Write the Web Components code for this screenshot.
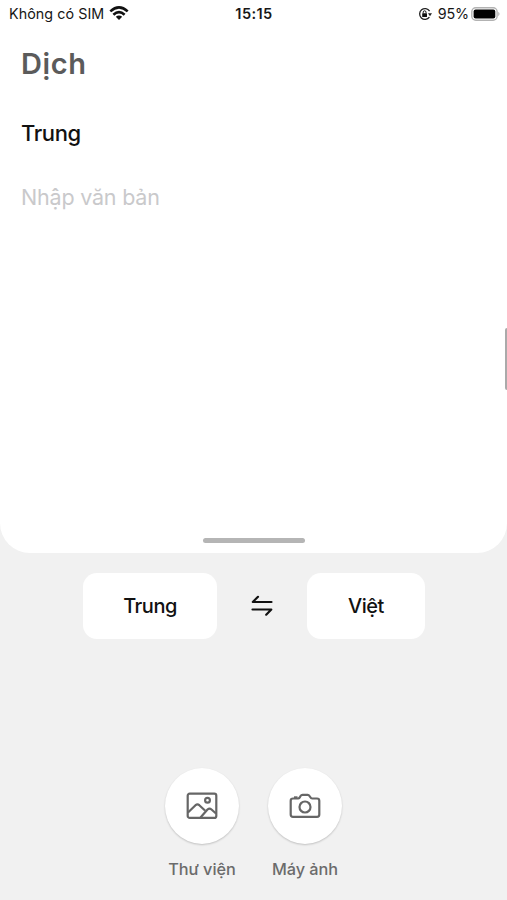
<!DOCTYPE html>
<html lang="vi"><head><meta charset="utf-8"><title>Dịch</title>
<style>html,body{margin:0;height:100%}body{overflow:hidden;background:#f1f1f1;font-family:Inter,"Liberation Sans",sans-serif}</style></head>
<body><translate-app></translate-app>
<script>
const define = (name, html) => customElements.define(name, class extends HTMLElement {
  constructor() { super(); this.attachShadow({mode: 'open'}).innerHTML = html; }
});

define('status-bar', `<style>
:host{display:grid;grid-template-columns:1fr auto 1fr;align-items:center;height:28px;padding:0 7px 0 9px;color:#171717;font-size:14.3px;line-height:20px;box-sizing:border-box}
div{display:flex;align-items:center}.r{justify-content:flex-end}
.t{font-weight:600;letter-spacing:.4px;font-size:14.6px;margin-right:1px}
svg{display:block;flex:none}
.sim{letter-spacing:.06px;white-space:nowrap}.pct{letter-spacing:-.1px;margin:0 2px 0 6px}
</style>
<div><span class="sim">Không có SIM</span>
<svg style="margin-left:5px;margin-top:-1px" width="20" height="15" viewBox="0 0 20 15"><g fill="none" stroke="#111" stroke-width="2.6"><path d="M1.3 5.4Q10-2.5 18.7 5.4"/><path d="M4.4 8.7Q10 3.6 15.6 8.7"/></g><path d="M6.8 10.8Q10 8.1 13.2 10.8L10 14Z" fill="#111"/></svg></div>
<div class="t">15:15</div>
<div class="r"><svg width="14" height="14" viewBox="0 0 14 14"><path d="M11.6 4.1A5.4 5.4 0 1 0 11.4 10.2" fill="none" stroke="#222" stroke-width="1.3"/><path d="M10 6.3h4l-2 3z" fill="#222"/><rect x="4.2" y="6.2" width="4.8" height="3.8" rx=".5" fill="#111"/><path d="M5.2 6.4V5.2a1.4 1.4 0 0 1 2.8 0v1.2" fill="none" stroke="#111"/></svg>
<span class="pct">95%</span>
<svg width="29" height="14" viewBox="0 0 29 14"><rect x=".8" y=".8" width="25.3" height="12.4" rx="4" fill="#fff" stroke="#b2b2b2" stroke-width="1.4"/><rect x="2.6" y="2.6" width="21.7" height="8.8" rx="2" fill="#000"/><path d="M27.3 4.8q2.4 2.2 0 4.4z" fill="#aaa"/></svg></div>`);

define('text-sheet', `<style>
:host{display:flex;flex-direction:column;height:525px;background:#fff;border-radius:0 0 30px 30px;padding:0 21px;box-sizing:border-box;position:relative}
h1{margin:17px 0 0;font-size:29px;line-height:38px;font-weight:600;color:#5b5b5b;letter-spacing:.6px}
h2{margin:34.5px 0 0;font-size:22px;line-height:30px;font-weight:500;color:#111;letter-spacing:-.4px}
p{margin:34.5px 0 0;font-size:21.5px;line-height:30px;color:#c9c9cb;letter-spacing:-.2px;white-space:nowrap}
.grip{width:102px;height:5px;border-radius:3px;background:#b5b5b5;margin:auto auto 10px}
.scroll{position:absolute;right:0;top:300px;width:2px;height:62px;background:#aaa;border-radius:2px 0 0 2px}
</style><h1>Dịch</h1><h2>Trung</h2><p>Nhập văn bản</p><div class="grip"></div><div class="scroll"></div>`);

define('language-button', `<style>
:host{display:flex;align-items:center;justify-content:center;height:66px;background:#fff;border-radius:14px;color:#111;font-size:20px;font-weight:500;letter-spacing:-.5px}
</style><slot></slot>`);

define('swap-icon', `<style>:host{display:block;width:22px;height:22px}svg{display:block}</style>
<svg width="22" height="22" viewBox="0 0 22 22" fill="none" stroke="#111" stroke-width="2.2" stroke-linecap="round" stroke-linejoin="round"><path d="M20.5 7H1.8L7 1.8"/><path d="M1.5 14.5H20.3L15.2 19.7"/></svg>`);

define('round-action', `<style>
:host{display:flex;flex-direction:column;align-items:center;width:103px}
.c{width:74px;height:76px;border-radius:50%;background:#fff;display:flex;align-items:center;justify-content:center;box-shadow:0 1px 2px #0003}
.l{margin-top:14px;font-size:16.3px;line-height:22px;font-weight:500;color:#6b6b6b;white-space:nowrap;letter-spacing:-.05px}
</style><div class="c"><slot name="icon"></slot></div><div class="l"><slot></slot></div>`);

define('translate-app', `<style>
:host{display:flex;flex-direction:column;height:900px;background:#f1f1f1}
status-bar{background:#fff}
.langs{display:grid;grid-template-columns:134px 90px 118px;margin:20px 0 0 83px}
swap-icon{place-self:center}
.actions{display:flex;margin:129px 0 0 150.5px}
svg{display:block}
</style>
<status-bar></status-bar><text-sheet></text-sheet>
<div class="langs"><language-button>Trung</language-button><swap-icon></swap-icon><language-button>Việt</language-button></div>
<div class="actions">
<round-action><svg slot="icon" width="32" height="28" viewBox="0 0 32 28" fill="none" stroke="#666" stroke-width="2.2" stroke-linejoin="round"><rect x="1.7" y="1.7" width="28.6" height="24.2" rx="2"/><circle cx="21.5" cy="8.3" r="2.4"/><path d="M2 20.5L9.5 13.2Q11.5 11.7 13.3 13.2L19 18.5M14.5 25.5L21.5 17.5Q23.5 15.8 25.5 17.5L30 21.5"/></svg>Thư viện</round-action>
<round-action><svg slot="icon" width="32" height="28" viewBox="0 0 32 28" fill="none" stroke="#666" stroke-width="2.2" stroke-linejoin="round"><path d="M4 6.5H9.2Q10.4 6.3 11 5L11.7 3.8Q12.3 2.8 13.5 2.8H18.7Q19.8 2.8 20.4 3.8L21.2 5Q22 6.5 23.2 6.5H28Q30.3 6.5 30.3 8.8V22.5Q30.3 24.8 28 24.8H4Q1.7 24.8 1.7 22.5V8.8Q1.7 6.5 4 6.5Z"/><path d="M5 5.4H8.5"/><circle cx="16" cy="15" r="5.5"/></svg>Máy ảnh</round-action>
</div>`);
</script></body></html>
